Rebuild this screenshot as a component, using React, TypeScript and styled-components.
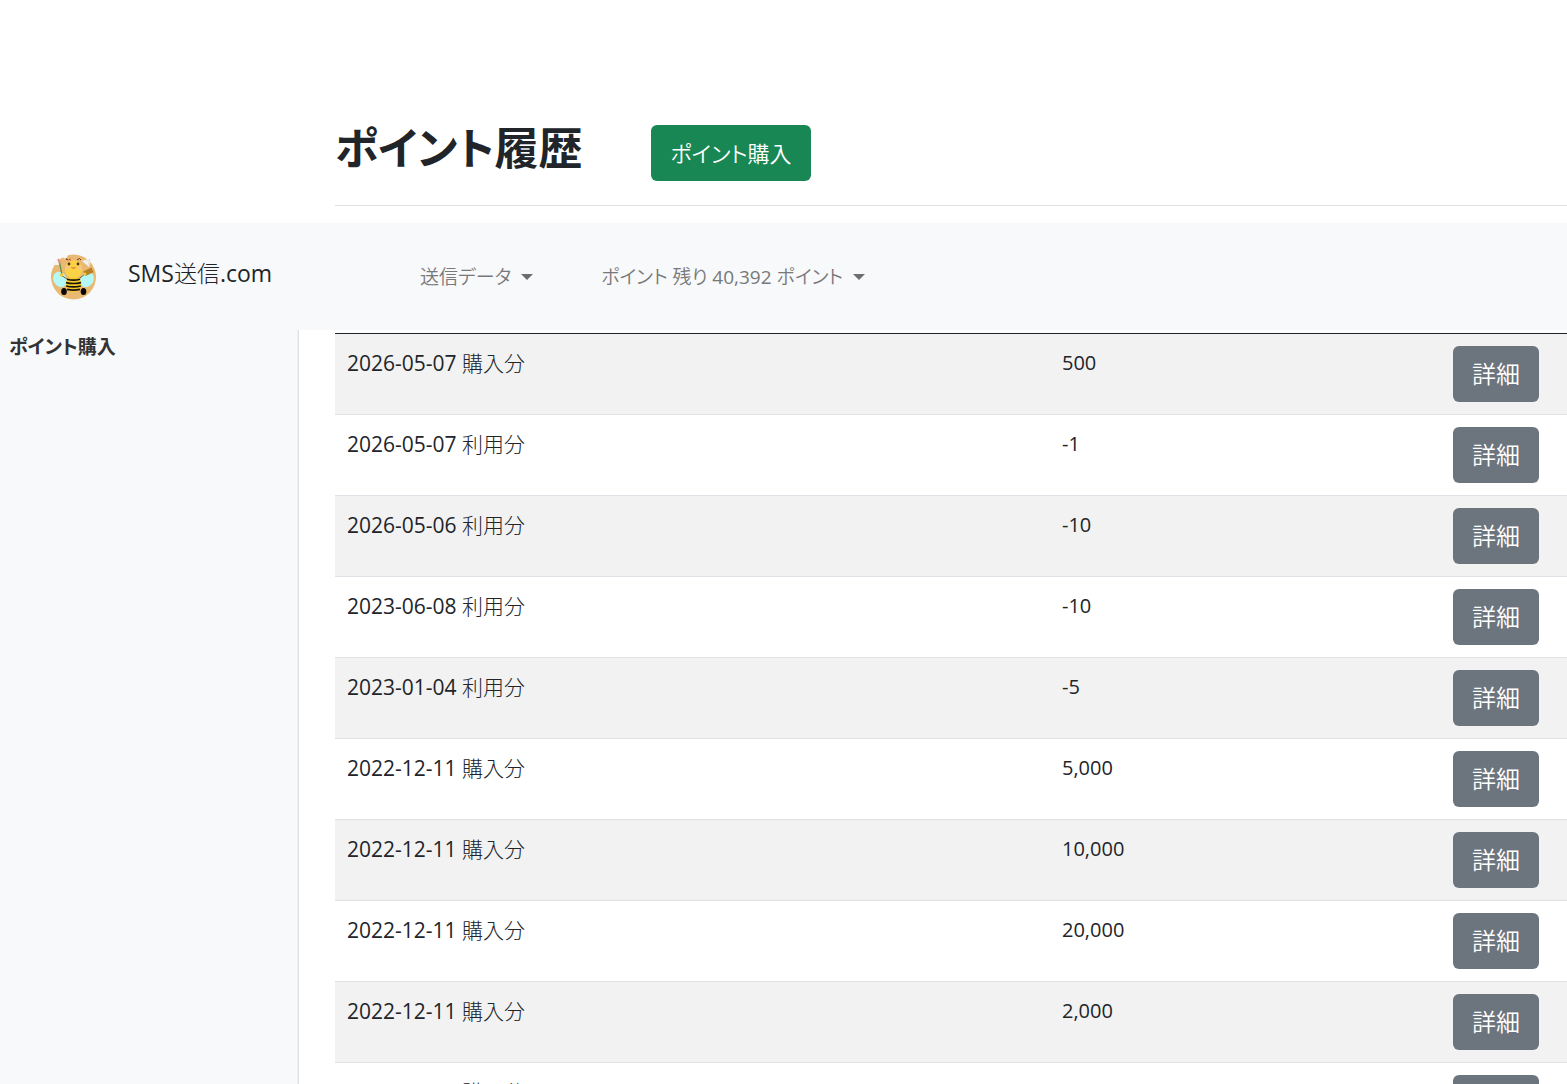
import React from "react";
import styled, { createGlobalStyle } from "styled-components";

const boldFamily = `"Open Sans", "Noto Sans CJK JP", sans-serif`;
const mediumFamily = `"Open Sans", "Noto Sans CJK JP DemiLight", "Noto Sans CJK JP", sans-serif`;

const GlobalStyle = createGlobalStyle`
  *, *::before, *::after { box-sizing: border-box; }
  body {
    margin: 0;
    background: #fff;
    color: #212529;
    font-family: "Open Sans", "Noto Sans CJK JP Light", "Noto Sans CJK JP", sans-serif;
    font-size: 21px;
    line-height: 32px;
    font-feature-settings: "palt";
  }
`;

const Page = styled.div`
  display: flex;
  flex-direction: column;
  height: 100vh;
  overflow: hidden;
`;

const Heading = styled.header`
  display: flex;
  align-items: flex-end;
  gap: 69px;
  flex: none;
  margin: 0 0 17px 335px;
  padding: 120px 0 24px;
  border-bottom: 1px solid #dee2e6;
`;

const Title = styled.h1`
  margin: 0;
  padding-bottom: 5px;
  font-family: ${boldFamily};
  font-size: 44px;
  line-height: 56px;
  font-weight: 700;
`;

const Button = styled.button<{ $tone: "success" | "secondary" }>`
  display: block;
  height: 56px;
  padding: 0 19px;
  border: 0;
  border-radius: 6px;
  background: ${(p) => (p.$tone === "success" ? "#198754" : "#6c757d")};
  color: #fff;
  font-family: ${mediumFamily};
  font-feature-settings: "palt";
  font-size: ${(p) => (p.$tone === "success" ? "22px" : "24px")};
  line-height: 36px;
  white-space: nowrap;
  cursor: pointer;
`;

const Navbar = styled.nav`
  display: flex;
  align-items: center;
  flex: none;
  height: 107px;
  padding: 0 51px;
  background: #f8f9fa;
`;

const Brand = styled.a`
  display: flex;
  align-items: center;
  gap: 32px;
  width: 369px;
  color: #212529;
  font-size: 23px;
  text-decoration: none;
`;

const BrandName = styled.span`
  padding-bottom: 8px;
`;

const NavList = styled.div`
  display: flex;
  gap: 68px;
`;

const NavToggle = styled.button`
  display: flex;
  align-items: center;
  gap: 10px;
  padding: 0;
  border: 0;
  background: none;
  color: #777879;
  font-family: ${mediumFamily};
  font-feature-settings: "palt";
  font-size: 19px;
  line-height: 32px;
  white-space: nowrap;
  cursor: pointer;

  &::after {
    content: "";
    border-top: 6px solid #6c6d6e;
    border-right: 6px solid transparent;
    border-left: 6px solid transparent;
  }
`;

const Body = styled.div`
  display: grid;
  grid-template-columns: 299px minmax(0, 1fr);
  flex: 1;
  min-height: 0;
`;

const Sidebar = styled.aside`
  padding: 0 9px;
  border-right: 1px solid #dee2e6;
  background: #f8f9fa;
  box-shadow: inset -1px 0 0 #eeeff0;
`;

const SideLink = styled.a`
  color: #333;
  font-family: ${boldFamily};
  font-size: 19px;
  font-weight: 700;
  text-decoration: none;
`;

const Main = styled.main`
  padding: 3px 0 0 36px;
  overflow: hidden;
`;

const Table = styled.table`
  width: 100%;
  table-layout: fixed;
  border-spacing: 0;
  border-top: 1px solid #212529;
`;

const Row = styled.tr`
  &:nth-child(odd) {
    background: #f2f2f2;
  }
`;

const Cell = styled.td<{ $numeric?: boolean }>`
  padding: 12px;
  border-bottom: 1px solid #dee2e6;
  font-size: ${(p) => (p.$numeric ? "20px" : "21px")};
  line-height: 34px;
  vertical-align: top;
`;

const PointsColumn = styled.col`
  width: 391px;
`;

const ActionColumn = styled.col`
  width: 126px;
`;

const BeeLogo = () => (
  <svg width="45" height="46" viewBox="0 0 45 46" aria-hidden="true">
    <circle cx="22.5" cy="23" r="22.5" fill="#e9b872" />
    <path d="M0 11 L7 5 L8 11Z M10 3 L18 0 L15 5Z M31 7 L40 4 L38 13Z" fill="#f4f4f1" />
    <path d="M34 8 L39 5 L37 11" fill="none" stroke="#d5d5d0" strokeWidth=".7" />
    <ellipse cx="9" cy="25.5" rx="6.5" ry="8" transform="rotate(-30 9 25.5)" fill="#b5f8f8" />
    <ellipse cx="36" cy="25.5" rx="6.5" ry="8" transform="rotate(30 36 25.5)" fill="#b5f8f8" />
    <path d="M8 6 L11 21" stroke="#4c8d45" strokeWidth="1.2" />
    <path d="M7 5 L9 9" stroke="#e68e91" strokeWidth="1.8" />
    <path d="M16 25 L10 21 M29 24 L34 20" stroke="#785d27" strokeWidth="1" />
    <rect x="33" y="15.5" width="9" height="5" transform="rotate(-25 37 18)" fill="#b88024" />
    <ellipse cx="22.5" cy="30" rx="7.6" ry="8" fill="#f3c928" />
    <path d="M16 25.2 Q22.5 27 29 25.2 M15 28.6 Q22.5 30.4 30 28.6 M15.2 32 Q22.5 33.8 29.8 32 M16 35.4 Q22.5 37 29 35.4" fill="none" stroke="#19150e" strokeWidth="1.7" />
    <ellipse cx="22.5" cy="15.3" rx="8.8" ry="9" fill="#fbd145" />
    <path d="M17 6 Q14 3 16 6 M26 6 Q29 3 30 6" fill="none" stroke="#5b391d" strokeWidth="1" />
    <path d="M16 5 L20 7 L19 4 L17 7Z" fill="#dc4c35" />
    <circle cx="18" cy="10" r="1.4" fill="#49351b" />
    <circle cx="27" cy="10" r="1.4" fill="#49351b" />
    <circle cx="16" cy="13.5" r="1.8" fill="#f6c0a0" />
    <circle cx="29" cy="13.5" r="1.8" fill="#f6c0a0" />
    <path d="M20.5 13.5 Q22.5 15 24.5 13.5" fill="none" stroke="#c75631" strokeWidth=".9" />
    <circle cx="10.5" cy="21" r="1.8" fill="#f2c833" />
    <circle cx="34" cy="20" r="1.5" fill="#f2c833" />
    <ellipse cx="13" cy="37.5" rx="2.8" ry="3.5" fill="#080706" />
    <ellipse cx="32.5" cy="37.5" rx="2.8" ry="3.5" fill="#080706" />
  </svg>
);

const history = [
  { label: "2026-05-07 購入分", points: 500 },
  { label: "2026-05-07 利用分", points: -1 },
  { label: "2026-05-06 利用分", points: -10 },
  { label: "2023-06-08 利用分", points: -10 },
  { label: "2023-01-04 利用分", points: -5 },
  { label: "2022-12-11 購入分", points: 5000 },
  { label: "2022-12-11 購入分", points: 10000 },
  { label: "2022-12-11 購入分", points: 20000 },
  { label: "2022-12-11 購入分", points: 2000 },
  { label: "2022-12-11 購入分", points: 1000 },
];

export default function App() {
  return (
    <Page>
      <GlobalStyle />
      <Heading>
        <Title>ポイント履歴</Title>
        <Button $tone="success">ポイント購入</Button>
      </Heading>
      <Navbar>
        <Brand href="#">
          <BeeLogo />
          <BrandName>SMS送信.com</BrandName>
        </Brand>
        <NavList>
          <NavToggle>送信データ</NavToggle>
          <NavToggle>ポイント 残り 40,392 ポイント</NavToggle>
        </NavList>
      </Navbar>
      <Body>
        <Sidebar>
          <SideLink href="#">ポイント購入</SideLink>
        </Sidebar>
        <Main>
          <Table>
            <colgroup>
              <col />
              <PointsColumn />
              <ActionColumn />
            </colgroup>
            <tbody>
              {history.map((entry, index) => (
                <Row key={index}>
                  <Cell>{entry.label}</Cell>
                  <Cell $numeric>{entry.points.toLocaleString("en-US")}</Cell>
                  <Cell>
                    <Button $tone="secondary">詳細</Button>
                  </Cell>
                </Row>
              ))}
            </tbody>
          </Table>
        </Main>
      </Body>
    </Page>
  );
}
